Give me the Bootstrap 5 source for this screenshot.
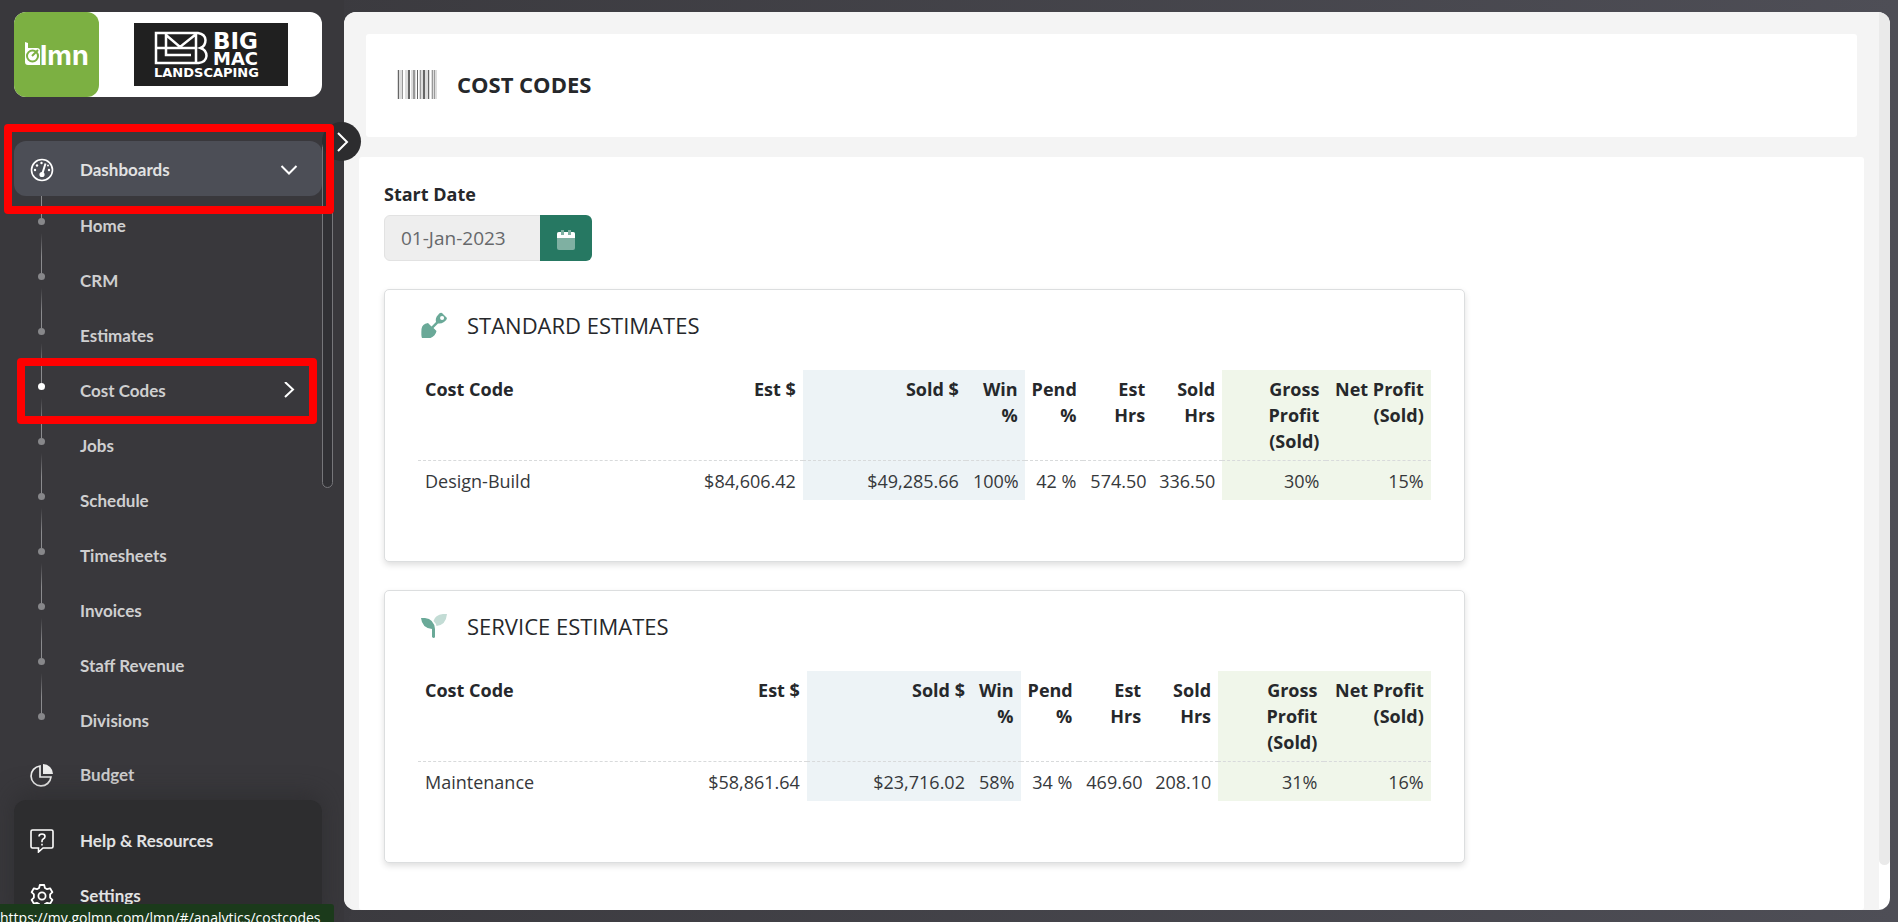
<!DOCTYPE html>
<html lang="en">
<head>
<meta charset="utf-8">
<meta name="viewport" content="width=device-width, initial-scale=1">
<title>Cost Codes</title>
<link rel="stylesheet" href="https://cdn.jsdelivr.net/npm/bootstrap@5.3.0/dist/css/bootstrap.min.css">
<style>
body{font-family:"Open Sans","Noto Sans",sans-serif;font-size:18px;line-height:26px;color:#26282b;background:linear-gradient(90deg,#37363a,#4e4e56);}
a{text-decoration:none;color:inherit}
/* sidebar */
.side{width:344px;padding:12px 22px 0 14px;font-family:Lato,"Open Sans",sans-serif;font-weight:700;color:#cfcfd0;background:#39383c}
.brand{height:85px;border-radius:12px;margin-bottom:44px}
.brand-green{width:85px;border-radius:12px;background:#7cb042}
.nav-area{min-height:0}
.nav-row{height:55px;padding:2px 0 0 16px;font-size:17px}
.nav-row svg{width:24px;height:24px;margin-right:26px;flex:none}
.nav-open{background:#4c4e56;border-radius:12px;color:#e2e2e3;border:0;width:100%;font-weight:700}
.nav-open .chev,.sub-row .chev{width:18px;height:18px;margin:0 24px 0 auto}
.sub-row{height:55px;padding:5px 0 0 66px;font-size:17px;position:relative}
.sub-row::before{content:"";position:absolute;left:27px;top:-18px;width:1px;height:40px;background:linear-gradient(transparent,#8b8b8e 60%)}
.sub-row::after{content:"";position:absolute;left:24px;top:22px;width:7px;height:7px;border-radius:50%;background:#87878a}
.sub-row.first::before{top:0;height:22px;background:#8b8b8e}
.sub-row.current::after{background:#fff}
.foot-panel{height:122px;padding-top:12px;background:#2d2d2f;border-radius:12px 12px 0 0;color:#e2e2e3;overflow:hidden;box-shadow:0 -6px 24px rgba(40,40,42,.55)}
.side-scroll{left:322px;top:141px;width:11px;height:347px;border:1px solid #76767a;border-radius:6px;background:#303034}
.toggler{left:322px;top:122px;width:39px;height:39px;border:0;border-radius:50%;background:#2d2d2f;padding:0;z-index:2}
.marker{border:8px solid #f00;border-radius:4px;pointer-events:none;z-index:3}
.marker-a{left:4px;top:124px;width:330px;height:90px}
.marker-b{left:17px;top:358px;width:300px;height:66px}
.status{left:0;bottom:0;width:334px;height:18px;background:#1b3a1b;color:#fff;font:400 14px/28px "Open Sans",sans-serif;border-top-right-radius:3px;overflow:hidden;z-index:4;white-space:nowrap}
/* main pane */
.pane{margin:12px 8px 12px 0;border-radius:12px;background:#fff}
.pane-body{background:#f4f4f4;min-width:0}
.gutter{width:11px}
.thumb{height:95%;background:#eaeaea;border-radius:0 0 6px 6px}
.page-head{margin:22px 22px 20px;height:103px;padding:0 0 3px 31px;border-radius:3px}
.page-head h1{font-size:22px;line-height:30px;font-weight:700}
.content-box{margin:0 15px;border-radius:3px}
.content-col{padding:24px 23px 0 25px}
.date-label{font-weight:700}
.date-group{width:208px;height:46px}
.date-group .form-control{background:#eee;border:1px solid #e2e2e2;color:#66686b;font-size:19px;font-weight:400;padding:0 16px}
.date-group .btn{width:52px;background:#267862;padding:0;border:0}
.est-card{border:1px solid #dcdedf;border-radius:5px;padding:20px 33px 61px;margin-top:28px;box-shadow:0 3px 6px rgba(0,0,0,.13)}
.est-card h2{font-size:22px;line-height:30px;font-weight:500}
.est-head{height:30px;margin-bottom:30px;padding-left:3px}
.est-head svg{width:26px;height:26px;margin-right:20px}
.cost-table{table-layout:fixed;width:100%;margin:0;color:#36383b;--bs-table-bg:transparent;--bs-table-color:#36383b}
.cost-table>:not(caption)>*>*{padding:7px 7px 6px;text-align:right;border:0;font-weight:400;box-shadow:none;vertical-align:top}
.cost-table>thead>tr>th{font-weight:700;padding:6px 7px;border-bottom:1px dashed #d8dadb;color:#26282b}
.cost-table>:not(caption)>*>:first-child{text-align:left}
.cost-table>:not(caption)>*>.sold{background:#edf3f6}
.cost-table>:not(caption)>*>.profit{background:#f0f6ea}
</style>
</head>
<body class="vh-100 overflow-hidden d-flex position-relative">
<aside class="side d-flex flex-column flex-shrink-0 vh-100">
  <div class="brand bg-white d-flex flex-shrink-0">
    <div class="brand-green d-flex align-items-center justify-content-center">
      <svg width="85" height="85" viewBox="0 0 85 85"><path d="M11 30l3 1v5h9q3 0 3 3v14H14q-3 0-3-3z" fill="#fff"/><circle cx="18.500" cy="44" r="5.500" fill="none" stroke="#7cb042" stroke-width="2"/><path d="M18 44l6-6" stroke="#7cb042" stroke-width="2"/><text x="26" y="53" font-family="Inter" font-weight="700" font-size="27" fill="#fff">lmn</text></svg>
    </div>
    <div class="flex-fill d-flex align-items-center justify-content-center">
      <svg width="154" height="63" viewBox="0 0 154 63"><rect width="154" height="63" fill="#202020"/><g fill="none" stroke="#fff" stroke-width="2.500"><path d="M22 10h42q7 1 7.500 7 0 6-5 8 6 2 6 8-.5 6-8 7H22zM22 25h41M32 10v22h25M32 12l14 12L61 12M62 10v30"/></g><g fill="#fff" font-family="DejaVu Sans" font-weight="700"><text x="79" y="26" font-size="23">BIG</text><text x="79" y="42" font-size="18">MAC</text><text x="20" y="54" font-size="13">LANDSCAPING</text></g></svg>
    </div>
  </div>
  <nav class="nav-area flex-fill overflow-hidden">
    <button type="button" class="nav-row nav-open d-flex align-items-center text-start">
      <svg viewBox="0 0 24 24" fill="none" stroke="#fff" stroke-width="1.600"><circle cx="12" cy="12" r="10.500"/><path d="M15.500 5.500L12.500 15" stroke-width="2"/><circle cx="12" cy="16.500" r="1.800" fill="#fff"/><g fill="#fff" stroke="none"><circle cx="11.500" cy="5" r="1.200"/><circle cx="7" cy="7.500" r="1.200"/><circle cx="5" cy="12" r="1.200"/><circle cx="19" cy="12" r="1.200"/><circle cx="18" cy="7.500" r="1"/></g></svg>
      <span>Dashboards</span>
      <svg class="chev" viewBox="0 0 18 18" fill="none" stroke="#fff" stroke-width="2"><path d="M1.500 5l7.500 7.500L16.500 5"/></svg>
    </button>
    <ul class="list-unstyled m-0">
      <li><a href="#" class="sub-row first d-flex align-items-center">Home</a></li>
      <li><a href="#" class="sub-row d-flex align-items-center">CRM</a></li>
      <li><a href="#" class="sub-row d-flex align-items-center">Estimates</a></li>
      <li><a href="#" class="sub-row current d-flex align-items-center">Cost Codes <svg class="chev" viewBox="0 0 18 18" fill="none" stroke="#fff" stroke-width="2"><path d="M5 0l8 7.500L5 15"/></svg></a></li>
      <li><a href="#" class="sub-row d-flex align-items-center">Jobs</a></li>
      <li><a href="#" class="sub-row d-flex align-items-center">Schedule</a></li>
      <li><a href="#" class="sub-row d-flex align-items-center">Timesheets</a></li>
      <li><a href="#" class="sub-row d-flex align-items-center">Invoices</a></li>
      <li><a href="#" class="sub-row d-flex align-items-center">Staff Revenue</a></li>
      <li><a href="#" class="sub-row d-flex align-items-center">Divisions</a></li>
    </ul>
    <a href="#" class="nav-row d-flex align-items-center"><svg viewBox="0 0 24 24"><path d="M13 1a10 10 0 0 1 10 10H13z" fill="#eee"/><path d="M10 3a10 10 0 1 0 11 11H10z" fill="none" stroke="#eee" stroke-width="1.700"/></svg>Budget</a>
  </nav>
  <div class="foot-panel flex-shrink-0 position-relative">
    <a href="#" class="nav-row d-flex align-items-center"><svg viewBox="0 0 24 24" fill="none" stroke="#fff" stroke-width="1.600"><path d="M2.500 1h19q1.500 0 1.500 1.500v15q0 1.500-1.500 1.500H13l-4.500 4V19h-6Q1 19 1 17.500v-15Q1 1 2.500 1z"/><path d="M9 7.500q0-2.500 3-2.500t3 2.500q0 1.500-1.500 2.200T12 12v1.200M12 14.800v1.700"/></svg>Help &amp; Resources</a>
    <a href="#" class="nav-row d-flex align-items-center"><svg viewBox="0 0 24 24" fill="none" stroke="#fff" stroke-width="1.800" stroke-linejoin="round"><circle cx="12" cy="12" r="3.600"/><path d="M9.800 1h4.400l.7 3 2.200 1.200 3-.9 2.300 3.900-2.300 2.200v3.200l2.300 2.200-2.300 3.900-3-.9-2.200 1.200-.7 3H9.800l-.7-3-2.200-1.200-3 .9-2.300-3.900 2.300-2.200v-3.200L1.600 8.200l2.300-3.900 3 .9L9.100 4z"/></svg>Settings</a>
  </div>
</aside>
<div class="side-scroll position-absolute"></div>
<button type="button" class="toggler position-absolute d-flex align-items-center justify-content-center" aria-label="Collapse menu"><svg width="18" height="22" viewBox="0 0 18 22" fill="none" stroke="#fff" stroke-width="2"><path d="M5 2l9 9-9 9"/></svg></button>
<div class="marker marker-a position-absolute"></div>
<div class="marker marker-b position-absolute"></div>

<main class="pane d-flex flex-fill overflow-hidden">
  <div class="pane-body flex-fill d-flex flex-column">
    <header class="page-head bg-white d-flex align-items-center flex-shrink-0">
      <svg width="40" height="29" viewBox="0 0 40 29" class="me-3"><g fill="#ddd"><path d="M0 0h6v29H0zM8 0h3v29H8zM14 0h5v29h-5zM22 0h4v29h-4zM28 0h5v29h-5zM34 0h6v29h-6z"/></g><g fill="#666"><path d="M1 0h1v29H1zM11 0h2v29h-2zM20 0h1v29h-1zM26 0h2v29h-2zM31 0h1v29h-1z"/></g><g fill="#999"><path d="M5 0h1v29H5zM16 0h2v29h-2zM23 0h1v29h-1zM35 0h1v29h-1zM37 0h1v29h-1z"/></g></svg>
      <h1 class="m-0 ms-1">COST CODES</h1>
    </header>
    <section class="content-box bg-white flex-fill">
      <div class="row g-0">
        <div class="col-9 content-col">
          <label for="start" class="date-label d-block mb-2">Start Date</label>
          <div class="input-group date-group flex-nowrap">
            <input id="start" class="form-control" type="text" value="01-Jan-2023">
            <button type="button" class="btn" aria-label="Pick a date"><svg width="18" height="20" viewBox="0 0 18 20"><rect y="2" width="18" height="18" rx="2" fill="#7fb0a2"/><path d="M2 2h14q2 0 2 2v4H0V4q0-2 2-2z" fill="#fff"/><path d="M4 0h3v5H4zM11 0h3v5h-3z" fill="#7fb0a2"/></svg></button>
          </div>

          <article class="est-card bg-white">
            <div class="est-head d-flex align-items-center">
              <svg viewBox="0 0 26 26"><path d="M7 11l3.500 3.500 4.500-4.500q-1-4 2-7 2-3 4-2l5 5q0 2-3 4-3 2-6 1.500L12.500 16l3 3q-1 5-6 7H1Q0 24 .5 17 1 12 7 11zM21 4a2 2 0 1 0 .1 4 2 2 0 0 0 0-4z" fill="#6aa998" fill-rule="evenodd"/></svg>
              <h2 class="m-0">STANDARD ESTIMATES</h2>
            </div>
            <table class="table cost-table">
              <colgroup><col style="width:22.200%"><col style="width:15.800%"><col style="width:16.100%"><col style="width:5.800%"><col style="width:5.800%"><col style="width:6.800%"><col style="width:6.900%"><col style="width:10.300%"><col style="width:10.300%"></colgroup>
              <thead><tr><th>Cost Code</th><th>Est $</th><th class="sold">Sold $</th><th class="sold">Win %</th><th>Pend %</th><th>Est Hrs</th><th>Sold Hrs</th><th class="profit">Gross Profit (Sold)</th><th class="profit text-nowrap">Net Profit<br>(Sold)</th></tr></thead>
              <tbody><tr><td>Design-Build</td><td>$84,606.42</td><td class="sold">$49,285.66</td><td class="sold">100%</td><td class="text-nowrap">42 %</td><td>574.50</td><td>336.50</td><td class="profit">30%</td><td class="profit">15%</td></tr></tbody>
            </table>
          </article>

          <article class="est-card bg-white">
            <div class="est-head d-flex align-items-center">
              <svg viewBox="0 0 26 26"><path d="M0 5h4q9 1 10 11v8q-1 2-3 0v-8Q1 15 0 5z" fill="#6aa998"/><path d="M26 1h-4q-8 1-9.500 7 3 3 3 5Q25 12 26 1z" fill="#c3dcd5"/></svg>
              <h2 class="m-0">SERVICE ESTIMATES</h2>
            </div>
            <table class="table cost-table">
              <colgroup><col style="width:22.200%"><col style="width:16.200%"><col style="width:16.300%"><col style="width:4.800%"><col style="width:5.800%"><col style="width:6.800%"><col style="width:6.900%"><col style="width:10.500%"><col style="width:10.500%"></colgroup>
              <thead><tr><th>Cost Code</th><th>Est $</th><th class="sold">Sold $</th><th class="sold">Win %</th><th>Pend %</th><th>Est Hrs</th><th>Sold Hrs</th><th class="profit">Gross Profit (Sold)</th><th class="profit text-nowrap">Net Profit<br>(Sold)</th></tr></thead>
              <tbody><tr><td>Maintenance</td><td>$58,861.64</td><td class="sold">$23,716.02</td><td class="sold">58%</td><td class="text-nowrap">34 %</td><td>469.60</td><td>208.10</td><td class="profit">31%</td><td class="profit">16%</td></tr></tbody>
            </table>
          </article>
        </div>
      </div>
    </section>
  </div>
  <div class="gutter flex-shrink-0"><div class="thumb"></div></div>
</main>
<div class="status position-absolute">https://my.golmn.com/lmn/#/analytics/costcodes</div>
<script src="https://cdn.jsdelivr.net/npm/bootstrap@5.3.0/dist/js/bootstrap.bundle.min.js"></script>
</body>
</html>
